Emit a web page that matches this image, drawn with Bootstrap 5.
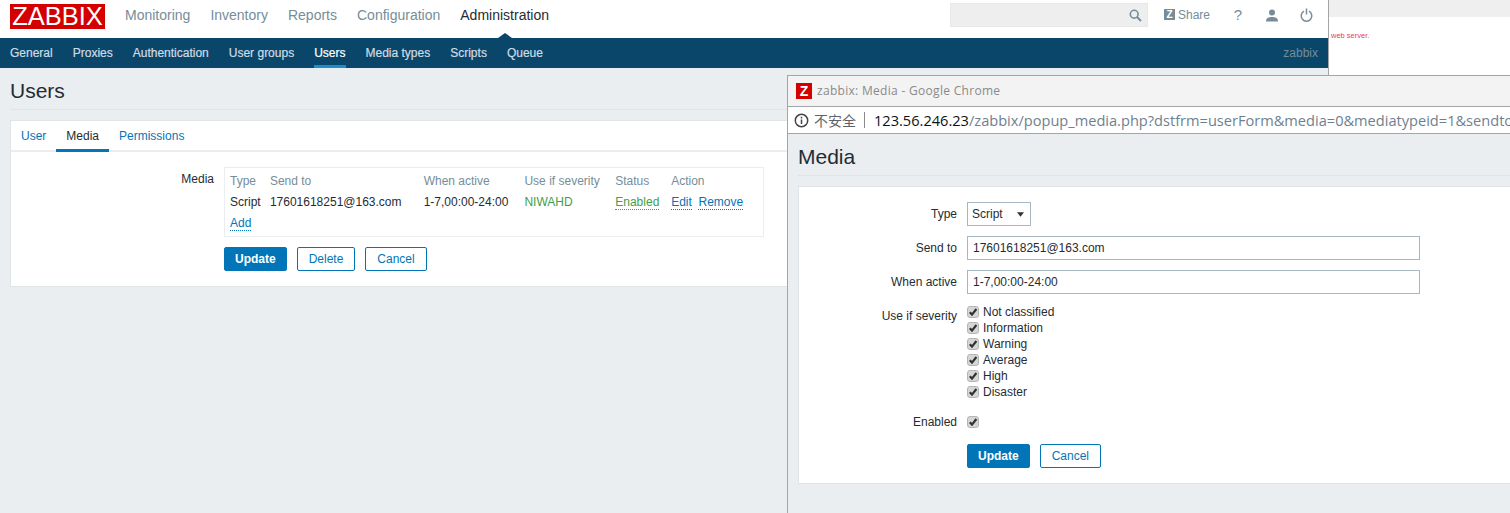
<!DOCTYPE html>
<html lang="en">
<head>
    <meta charset="UTF-8">
    <meta name="viewport" content="width=device-width, initial-scale=1.0">
    <title>zabbix: Users</title>
    <link href="https://cdn.jsdelivr.net/npm/bootstrap@5.3.0/dist/css/bootstrap.min.css" rel="stylesheet">
    <style>
        html, body { height: 513px; overflow: hidden; }
        body { position: relative; background: #ebeef0; color: #1f2c33; font: 12px/14px "Liberation Sans", Arial, sans-serif; }
        a { text-decoration: none; color: #0275b8; }
        .zbx-main { width: 1328px; }

        .top-bar { height: 38px; background: #fff; padding: 0 10px; }
        .zbx-logo { width: 95px; height: 25px; background: #d40000; color: #fff; font-size: 25.500px; line-height: 25px; text-align: center; margin-top: -6px; margin-right: 20px; }
        .top-menu { gap: 20px; font-size: 14px; margin-top: -8px; }
        .top-menu a { color: #768d99; position: relative; }
        .top-menu a.on { color: #1f2c33; }
        .top-menu a.on::after { content: ""; position: absolute; left: 38px; top: 25px; border: 7px solid transparent; border-top: 0; border-bottom: 5px solid #0a466a; }
        .zbx-search { width: 198px; height: 24px; background: #eee; border: 1px solid #e8e8e8; margin-top: -8px; padding-right: 5px; }
        .top-tools { margin-top: -8px; margin-right: -5px; color: #768d99; }
        .share-z { width: 11px; height: 11px; background: #768d99; color: #fff; font-size: 10px; line-height: 11px; font-weight: bold; text-align: center; margin-right: 3px; }
        .share-box { margin-left: 16px; width: 57px; }
        .help-mark { width: 34px; text-align: center; font-size: 15px; }
        .tool-box { width: 34px; text-align: center; }

        .sub-bar { height: 30px; background: #0a466a; padding: 0 10px; }
        .sub-menu { gap: 20px; height: 30px; }
        .sub-menu a { color: #d0dce4; line-height: 31px; height: 30px; -webkit-text-stroke: .2px; }
        .sub-menu a.on { color: #fff; border-bottom: 3px solid #1f8ccc; }
        .sub-user { color: #768d99; }

        .page-head { margin: 0 10px; height: 42px; border-bottom: 1px solid #dfe4e7; }
        .page-title { font: 400 21px/24px "Liberation Sans", Arial, sans-serif; margin: 0; padding-top: 11px; color: #1f2c33; }

        .zbx-panel { background: #fff; border: 1px solid #dfe4e7; margin: 10px 10px 0; height: 167px; }
        .zbx-tabs { height: 31px; border-bottom: 2px solid #ebeef0; }
        .zbx-tabs a { padding: 0 10px; line-height: 30px; height: 31px; }
        .zbx-tabs a.on { color: #1f2c33; border-bottom: 3px solid #0275b8; }
        .panel-body { padding: 15px 0 0 0; }
        .field-name { width: 203px; text-align: right; padding-top: 5px; margin-right: 10px; }
        .media-box { width: 540px; border: 1px solid #ebeef0; padding: 2px 5px; height: 70px; }
        .media-tbl { margin: 0; width: auto; color: #1f2c33; font-size: 12px; }
        .media-tbl th, .media-tbl td { padding: 0; height: 21px; border: 0; font-weight: 400; white-space: nowrap; vertical-align: middle; box-shadow: none; background: none; }
        .media-tbl th { color: #768d99; }
        .c-type { width: 40px; } .c-send { width: 154px; } .c-when { width: 101px; } .c-sev { width: 91px; } .c-stat { width: 56px; } .c-act { width: 87px; }
        .sev-ok { color: #429e47; }
        .dot-link { border-bottom: 1px dotted currentColor; }
        .status-ok { color: #429e47; }

        .zbx-btn { height: 24px; font-size: 12px; line-height: 22px; padding: 0 11px; border-radius: 2px; border: 1px solid #0275b8; color: #0275b8; background: #fff; }
        .zbx-btn:hover { color: #0275b8; background: #fff; border-color: #0275b8; }
        .zbx-btn.main-act, .zbx-btn.main-act:hover { background: #0275b8; color: #fff; font-weight: bold; padding: 0 10px; }
        .form-actions { margin: 10px 0 0 213px; gap: 10px; }

        .side-win { position: absolute; left: 1328px; top: 0; right: 0; height: 75px; background: #fff; border-left: 1px solid #a5a5a5; }
        .side-strip { height: 17px; background: #efefef; }
        .side-msg { font-size: 7.500px; line-height: 10px; color: #e8404d; padding: 14px 0 0 2px; }

        .popup-win { position: absolute; left: 787px; top: 75px; right: 0; bottom: 0; background: #ebeef0; border-left: 1px solid #a5a5a5; border-top: 1px solid #a5a5a5; overflow: hidden; }
        .win-title { height: 31px; background: #f3f3f3; padding: 0 0 1px 8px; border-bottom: 1px solid #a5a5a5; font: 12px/16px "Open Sans", sans-serif; color: #8a8a8a; white-space: nowrap; letter-spacing: .3px; }
        .fav-z { width: 16px; height: 16px; background: #d40000; color: #fff; font: bold 14px/16px "Liberation Sans", sans-serif; text-align: center; margin-right: 5px; letter-spacing: 0; }
        .win-url { height: 27px; background: #fff; border-bottom: 1px solid #a5a5a5; padding-left: 6px; white-space: nowrap; overflow: hidden; color: #5a5a5a; }
        .url-note { font: 14px/25px "Noto Sans CJK SC", sans-serif; color: #5f6368; margin-left: 5px; }
        .url-sep { width: 1px; height: 16px; background: #8a8a8a; margin: 0 9px 0 8px; }
        .url-text { font: 14.600px/25px "Open Sans", sans-serif; color: #6f7f8f; }
        .url-host { color: #111; }
        .pop-head { margin: 0 0 0 10px; height: 42px; border-bottom: 1px solid #dfe4e7; }
        .pop-panel { background: #fff; border: 1px solid #dfe4e7; border-right: 0; margin: 10px 0 0 10px; padding: 15px 0; height: 298px; }
        .pop-row { margin-bottom: 10px; }
        .pop-label { width: 158px; text-align: right; margin-right: 10px; line-height: 14px; }
        .sev-label { padding-top: 5px; }
        .pop-input { height: 24px; width: 453px; border: 1px solid #a8b8c2; border-radius: 0; padding: 0 5px; font-size: 12px; color: #1f2c33; box-shadow: none; }
        .pop-select { width: 64px; height: 24px; border: 1px solid #a8b8c2; border-radius: 0; padding: 0 4px; font-size: 12px; color: #1f2c33; background-size: 7px 5px; background-position: right 6px center; background-image: url("data:image/svg+xml,%3csvg xmlns='http://www.w3.org/2000/svg' viewBox='0 0 9 6'%3e%3cpath fill='%23333' d='M0 0h9L4.500 6z'/%3e%3c/svg%3e"); }
        .sev-item { height: 16px; line-height: 16px; }
        .zbx-check { width: 12px; height: 12px; margin: 0 4px 0 0; border: 1px solid #b5b5b5; border-radius: 2px; background-color: #d6d6d6; flex: none; }
        .zbx-check:checked { background-color: #d6d6d6; border-color: #b5b5b5; background-size: 10px 10px; background-image: url("data:image/svg+xml,%3csvg xmlns='http://www.w3.org/2000/svg' viewBox='0 0 10 10'%3e%3cpath fill='none' stroke='%23333' stroke-width='2.200' d='M1.800 5.200 4 7.600 8.400 2'/%3e%3c/svg%3e"); }
        .enabled-row { height: 24px; }
        .pop-actions { margin-left: 168px; gap: 10px; }
    </style>
</head>
<body>
    <div class="zbx-main">
        <div class="top-bar d-flex align-items-center">
            <div class="zbx-logo">ZABBIX</div>
            <nav class="top-menu d-flex">
                <a href="#">Monitoring</a>
                <a href="#">Inventory</a>
                <a href="#">Reports</a>
                <a href="#">Configuration</a>
                <a href="#" class="on">Administration</a>
            </nav>
            <div class="ms-auto d-flex align-items-center">
                <div class="zbx-search d-flex align-items-center justify-content-end">
                    <svg width="13" height="13" viewBox="0 0 13 13"><circle cx="5.200" cy="5.200" r="3.900" fill="none" stroke="#768d99" stroke-width="1.600"/><path d="M8 8l4 4" stroke="#768d99" stroke-width="2"/></svg>
                </div>
                <div class="top-tools d-flex align-items-center">
                    <div class="share-box d-flex align-items-center"><span class="share-z">Z</span>Share</div>
                    <div class="help-mark">?</div>
                    <div class="tool-box">
                        <svg width="14" height="13" viewBox="0 0 14 13"><circle cx="7" cy="3.500" r="3" fill="#768d99"/><path d="M1 12.500c0-3.500 2.500-4.500 6-4.500s6 1 6 4.500z" fill="#768d99"/></svg>
                    </div>
                    <div class="tool-box">
                        <svg width="13" height="14" viewBox="0 0 13 14"><path d="M4 3.200a5.300 5.300 0 1 0 5 0" fill="none" stroke="#768d99" stroke-width="1.500"/><path d="M6.500 0.500v6" stroke="#768d99" stroke-width="1.500"/></svg>
                    </div>
                </div>
            </div>
        </div>
        <div class="sub-bar d-flex justify-content-between">
            <nav class="sub-menu d-flex">
                <a href="#">General</a>
                <a href="#">Proxies</a>
                <a href="#">Authentication</a>
                <a href="#">User groups</a>
                <a href="#" class="on">Users</a>
                <a href="#">Media types</a>
                <a href="#">Scripts</a>
                <a href="#">Queue</a>
            </nav>
            <div class="sub-user align-self-center">zabbix</div>
        </div>
        <div class="page-head"><h1 class="page-title">Users</h1></div>
        <div class="zbx-panel">
            <div class="zbx-tabs d-flex">
                <a href="#">User</a>
                <a href="#" class="on">Media</a>
                <a href="#">Permissions</a>
            </div>
            <div class="panel-body">
                <div class="d-flex">
                    <div class="field-name">Media</div>
                    <div class="media-box">
                        <table class="table media-tbl">
                            <thead>
                                <tr>
                                    <th class="c-type">Type</th>
                                    <th class="c-send">Send to</th>
                                    <th class="c-when">When active</th>
                                    <th class="c-sev">Use if severity</th>
                                    <th class="c-stat">Status</th>
                                    <th class="c-act">Action</th>
                                </tr>
                            </thead>
                            <tbody>
                                <tr>
                                    <td>Script</td>
                                    <td>17601618251@163.com</td>
                                    <td>1-7,00:00-24:00</td>
                                    <td class="sev-ok">NIWAHD</td>
                                    <td><a href="#" class="dot-link status-ok">Enabled</a></td>
                                    <td><a href="#" class="dot-link">Edit</a> &nbsp;<a href="#" class="dot-link">Remove</a></td>
                                </tr>
                                <tr>
                                    <td colspan="6"><a href="#" class="dot-link">Add</a></td>
                                </tr>
                            </tbody>
                        </table>
                    </div>
                </div>
                <div class="form-actions d-flex">
                    <button class="btn zbx-btn main-act">Update</button>
                    <button class="btn zbx-btn">Delete</button>
                    <button class="btn zbx-btn">Cancel</button>
                </div>
            </div>
        </div>
    </div>

    <div class="side-win">
        <div class="side-strip"></div>
        <div class="side-msg">web server.</div>
    </div>

    <div class="popup-win">
        <div class="win-title d-flex align-items-center"><span class="fav-z">Z</span>zabbix: Media - Google Chrome</div>
        <div class="win-url d-flex align-items-center">
            <svg width="15" height="15" viewBox="0 0 15 15" class="flex-shrink-0"><circle cx="7.500" cy="7.500" r="6.200" fill="none" stroke="#444" stroke-width="1.500"/><path d="M7.500 6.500v4.500M7.500 3.800v1.600" stroke="#444" stroke-width="1.500"/></svg>
            <span class="url-note">不安全</span>
            <span class="url-sep flex-shrink-0"></span>
            <span class="url-text"><span class="url-host">123.56.246.23</span>/zabbix/popup_media.php?dstfrm=userForm&amp;media=0&amp;mediatypeid=1&amp;sendto</span>
        </div>
        <div class="pop-head"><h1 class="page-title">Media</h1></div>
        <div class="pop-panel">
            <div class="pop-row d-flex align-items-center">
                <label class="pop-label">Type</label>
                <select class="form-select pop-select"><option>Script</option></select>
            </div>
            <div class="pop-row d-flex align-items-center">
                <label class="pop-label">Send to</label>
                <input class="form-control pop-input" value="17601618251@163.com">
            </div>
            <div class="pop-row d-flex align-items-center">
                <label class="pop-label">When active</label>
                <input class="form-control pop-input" value="1-7,00:00-24:00">
            </div>
            <div class="pop-row d-flex">
                <label class="pop-label sev-label">Use if severity</label>
                <div class="d-flex flex-column">
                    <label class="sev-item d-flex align-items-center"><input type="checkbox" class="form-check-input zbx-check" checked>Not classified</label>
                    <label class="sev-item d-flex align-items-center"><input type="checkbox" class="form-check-input zbx-check" checked>Information</label>
                    <label class="sev-item d-flex align-items-center"><input type="checkbox" class="form-check-input zbx-check" checked>Warning</label>
                    <label class="sev-item d-flex align-items-center"><input type="checkbox" class="form-check-input zbx-check" checked>Average</label>
                    <label class="sev-item d-flex align-items-center"><input type="checkbox" class="form-check-input zbx-check" checked>High</label>
                    <label class="sev-item d-flex align-items-center"><input type="checkbox" class="form-check-input zbx-check" checked>Disaster</label>
                </div>
            </div>
            <div class="pop-row enabled-row d-flex align-items-center">
                <label class="pop-label">Enabled</label>
                <input type="checkbox" class="form-check-input zbx-check" checked>
            </div>
            <div class="pop-actions d-flex">
                <button class="btn zbx-btn main-act">Update</button>
                <button class="btn zbx-btn">Cancel</button>
            </div>
        </div>
    </div>
    <script src="https://cdn.jsdelivr.net/npm/bootstrap@5.3.0/dist/js/bootstrap.bundle.min.js"></script>
</body>
</html>
